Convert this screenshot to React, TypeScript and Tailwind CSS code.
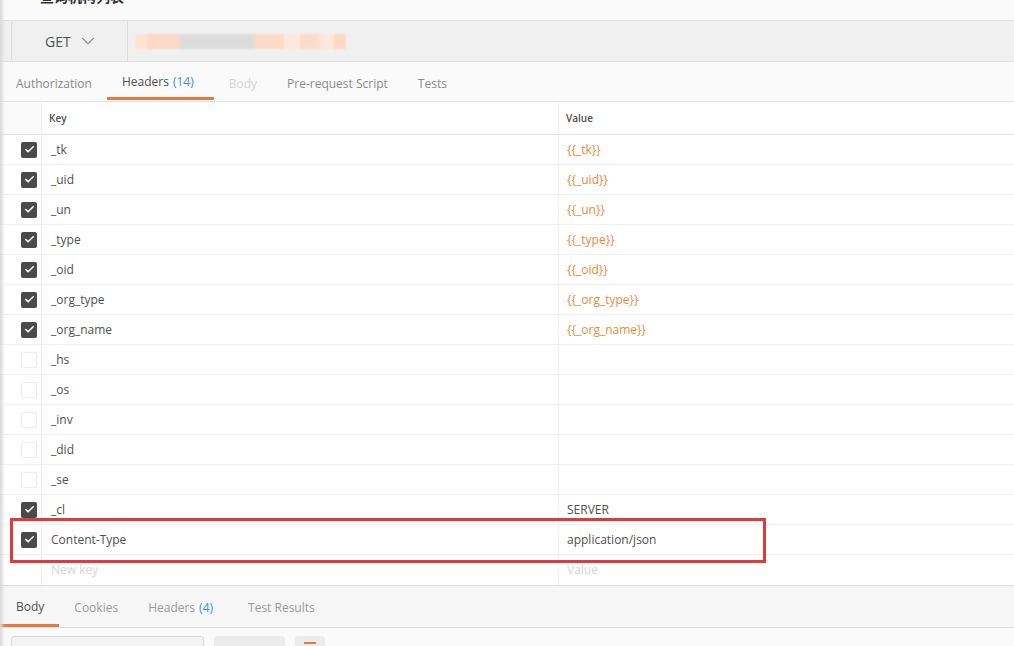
import { ChevronDown, Check } from 'lucide-react';

type Row = { k: string; v: string; on: boolean; tpl?: boolean };

const rows: Row[] = [
  { k: '_tk', v: '{{_tk}}', on: true, tpl: true },
  { k: '_uid', v: '{{_uid}}', on: true, tpl: true },
  { k: '_un', v: '{{_un}}', on: true, tpl: true },
  { k: '_type', v: '{{_type}}', on: true, tpl: true },
  { k: '_oid', v: '{{_oid}}', on: true, tpl: true },
  { k: '_org_type', v: '{{_org_type}}', on: true, tpl: true },
  { k: '_org_name', v: '{{_org_name}}', on: true, tpl: true },
  { k: '_hs', v: '', on: false },
  { k: '_os', v: '', on: false },
  { k: '_inv', v: '', on: false },
  { k: '_did', v: '', on: false },
  { k: '_se', v: '', on: false },
  { k: '_cl', v: 'SERVER', on: true },
  { k: 'Content-Type', v: 'application/json', on: true },
];

function Box({ on }: { on: boolean }) {
  if (on)
    return (
      <span className="flex h-[16px] w-[16px] items-center justify-center rounded-[2px] bg-[#4a4a4a]">
        <Check size={11} strokeWidth={3.5} className="text-white" />
      </span>
    );
  return <span className="block h-[16px] w-[16px] rounded-[2px] border border-[#ececec] bg-white" />;
}

function HeaderRow({ r }: { r: Row }) {
  return (
    <div className="flex h-[30px] border-b border-[#f0f0f0] text-[12px]">
      <div className="flex w-[42px] items-center justify-end pr-[4px] border-r border-[#ececec]">
        <Box on={r.on} />
      </div>
      <div className="flex w-[517px] items-center pl-[9px] text-[#505050] border-r border-[#f0f0f0]">{r.k}</div>
      <div className={`flex flex-1 items-center pl-[8px] ${r.tpl ? 'text-[#f0883e]' : 'text-[#505050]'}`}>{r.v}</div>
    </div>
  );
}

export default function App() {
  return (
    <div
      className="relative h-[646px] w-[1014px] overflow-hidden bg-[#fafafa]"
      style={{ fontFamily: '"Open Sans", "Noto Sans CJK SC", sans-serif' }}
    >
      {/* left shadow */}
      <div className="absolute left-0 top-0 z-10 h-full w-[5px] bg-gradient-to-r from-[#d8d8d8] to-transparent" />

      {/* title, cut off at top */}
      <div className="h-[20px] overflow-hidden pl-[40px]">
        <div className="-mt-[13px] text-[14px] font-semibold leading-[20px] text-[#333]">查询机构列表</div>
      </div>

      {/* url bar */}
      <div className="flex h-[42px] border-y border-[#e2e2e2] bg-[#f0f0f0]">
        <div className="ml-[11px] flex w-[117px] items-center gap-[6px] rounded-l-[3px] border-x border-[#dcdcdc] bg-[#f0f0f0] pl-[33px] text-[14px] text-[#505050]">
          GET
          <ChevronDown size={22} strokeWidth={1.2} className="text-[#909090]" />
        </div>
        <div className="flex flex-1 items-center pl-[7px]">
          <div className="flex h-[15px] blur-[1px]">
            <div className="w-[12px] bg-[#fde3d3]" />
            <div className="w-[33px] bg-[#fbd9c6]" />
            <div className="w-[74px] bg-[#dcdcdc]" />
            <div className="w-[30px] bg-[#fbdac8]" />
            <div className="w-[16px] bg-[#fde8dc]" />
            <div className="w-[20px] bg-[#fbdccb]" />
            <div className="w-[14px] bg-[#fde8dc]" />
            <div className="w-[12px] bg-[#fcd8c4]" />
          </div>
        </div>
      </div>

      {/* request tabs */}
      <div className="flex h-[40px] items-stretch border-b border-[#e2e2e2] pt-[5px] text-[12px]">
        <div className="flex items-center pl-[16px] pr-[15px] text-[#8a8a8a]">Authorization</div>
        <div className="flex flex-col justify-between">
          <div className="flex flex-1 items-center pl-[15px] pr-[20px] text-[#505050]">
            Headers<span className="ml-[4px] text-[#3f8fd8]">(14)</span>
          </div>
          <div className="mb-[1px] h-[3px] bg-[#e8793a]" />
        </div>
        <div className="flex items-center px-[15px] text-[#d2d2d2]">Body</div>
        <div className="flex items-center px-[15px] text-[#8a8a8a]">Pre-request Script</div>
        <div className="flex items-center px-[15px] text-[#8a8a8a]">Tests</div>
      </div>

      {/* headers table */}
      <div className="bg-white">
        <div className="flex h-[33px] border-b border-[#e4e4e4] pt-[1px] text-[10px] font-semibold text-[#505050]">
          <div className="w-[42px] border-r border-[#ececec] bg-[#fafafa]" />
          <div className="flex w-[517px] items-center pl-[7px] border-r border-[#f0f0f0]">Key</div>
          <div className="flex flex-1 items-center pl-[7px]">Value</div>
        </div>
        {rows.map((r) => (
          <HeaderRow key={r.k} r={r} />
        ))}
        <div className="flex h-[30px] text-[12px] text-[#d6d6d6]">
          <div className="w-[42px] border-r border-[#ececec]" />
          <div className="flex w-[517px] items-center pl-[9px] border-r border-[#f0f0f0]">New key</div>
          <div className="flex flex-1 items-center pl-[8px]">Value</div>
        </div>
      </div>

      {/* response tabs */}
      <div className="flex h-[43px] border-y border-[#dcdcdc] bg-[#f6f6f6] text-[12px]">
        <div className="flex flex-col justify-between">
          <div className="flex flex-1 items-center pl-[16px] pr-[15px] pt-[3px] text-[#505050]">Body</div>
          <div className="h-[3px] bg-[#e8793a]" />
        </div>
        <div className="flex items-center px-[15px] pt-[3px] text-[#9a9a9a]">Cookies</div>
        <div className="flex items-center px-[15px] pt-[3px] text-[#9a9a9a]">
          Headers<span className="ml-[4px] text-[#3f8fd8]">(4)</span>
        </div>
        <div className="flex items-center px-[20px] pt-[3px] text-[#9a9a9a]">Test Results</div>
      </div>

      <div className="flex gap-[10px] pl-[11px] pt-[8px]">
        <div className="h-[30px] w-[193px] rounded-[3px] border border-[#d8d8d8] bg-[#f3f3f3]" />
        <div className="h-[30px] w-[71px] rounded-[3px] bg-[#ececec]" />
        <div className="flex h-[30px] w-[30px] justify-center rounded-[3px] bg-[#ececec] pt-[6px]">
          <div className="h-[2px] w-[12px] bg-[#e8793a]" />
        </div>
      </div>

      {/* red annotation */}
      <div className="absolute left-[10px] top-[518px] h-[45px] w-[756px] border-[3px] border-[#e0393e]" />
    </div>
  );
}
